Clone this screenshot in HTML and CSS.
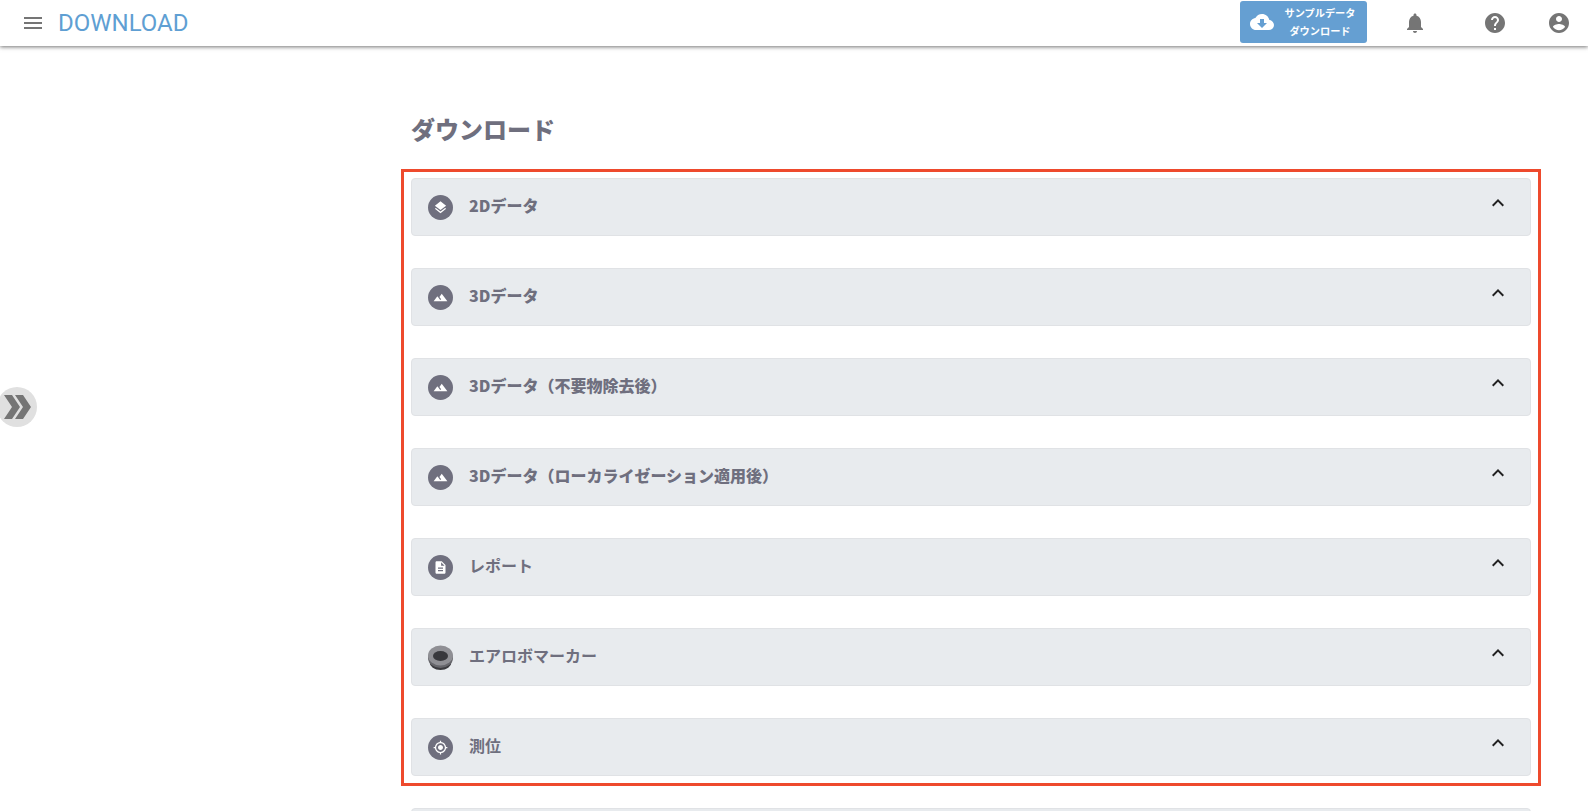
FILE: index.html
```html
<!DOCTYPE html>
<html lang="ja">
<head>
    <meta charset="UTF-8">
    <meta name="viewport" content="width=device-width, initial-scale=1.0">
    <title>DOWNLOAD</title>
    <link rel="stylesheet" href="styles.css">
</head>
<body>

<header class="topbar">
    <svg class="menu-icon" viewBox="0 0 24 24"><path d="M3 18h18v-2H3v2zm0-5h18v-2H3v2zm0-7v2h18V6H3z"/></svg>
    <span class="topbar-title">DOWNLOAD</span>
    <a href="#" class="sample-btn">
        <svg class="sample-icon" viewBox="0 0 24 24"><path d="M19.35 10.04C18.67 6.59 15.64 4 12 4 9.11 4 6.6 5.64 5.35 8.04 2.34 8.36 0 10.91 0 14c0 3.31 2.69 6 6 6h13c2.76 0 5-2.24 5-5 0-2.64-2.05-4.78-4.65-4.96zM17 13l-5 5-5-5h3V9h4v4h3z"/></svg>
        <span class="sample-text">サンプルデータ<br>ダウンロード</span>
    </a>
    <svg class="bar-icon bell" viewBox="0 0 24 24"><path d="M12 22c1.1 0 2-.9 2-2h-4c0 1.1.89 2 2 2zm6-6v-5c0-3.07-1.64-5.64-4.5-6.32V4c0-.83-.67-1.5-1.5-1.5s-1.5.67-1.5 1.5v.68C7.63 5.36 6 7.92 6 11v5l-2 2v1h16v-1l-2-2z"/></svg>
    <svg class="bar-icon help" viewBox="0 0 24 24"><path d="M12 2C6.48 2 2 6.48 2 12s4.48 10 10 10 10-4.48 10-10S17.52 2 12 2zm1 17h-2v-2h2v2zm2.07-7.75l-.9.92C13.45 12.9 13 13.5 13 15h-2v-.5c0-1.1.45-2.1 1.17-2.83l1.24-1.26c.37-.36.59-.86.59-1.41 0-1.1-.9-2-2-2s-2 .9-2 2H8c0-2.21 1.79-4 4-4s4 1.79 4 4c0 .88-.36 1.68-.93 2.25z"/></svg>
    <svg class="bar-icon account" viewBox="0 0 24 24"><path d="M12 2C6.48 2 2 6.48 2 12s4.48 10 10 10 10-4.48 10-10S17.52 2 12 2zm0 3c1.66 0 3 1.34 3 3s-1.34 3-3 3-3-1.34-3-3 1.34-3 3-3zm0 14.2c-2.5 0-4.71-1.28-6-3.22.03-1.99 4-3.08 6-3.08 1.99 0 5.97 1.09 6 3.08-1.29 1.94-3.5 3.22-6 3.22z"/></svg>
</header>

<button class="side-toggle" aria-label="open">
    <svg viewBox="0 0 30 24"><path d="M1 0h8l8 12-8 12H1l8-12z"/><path d="M12 0h8l8 12-8 12h-8l8-12z"/></svg>
</button>

<main class="content">
    <h1 class="page-title">ダウンロード</h1>

    <div class="highlight-box">
        <div class="panel">
            <span class="panel-icon"><svg viewBox="0 0 24 24"><path d="M11.99 18.54l-7.37-5.73L3 14.07l9 7 9-7-1.63-1.27-7.38 5.74zM12 16l7.36-5.73L21 9l-9-7-9 7 1.63 1.27L12 16z"/></svg></span>
            <span class="panel-label bold">2Dデータ</span>
            <svg class="chevron" viewBox="0 0 24 24"><path d="M12 8l-6 6 1.41 1.41L12 10.83l4.59 4.58L18 14z"/></svg>
        </div>
        <div class="panel">
            <span class="panel-icon"><svg viewBox="0 0 24 24"><path d="M14 6l-3.75 5 2.85 3.8-1.6 1.2C9.81 13.75 7 10 7 10l-6 8h22L14 6z"/></svg></span>
            <span class="panel-label bold">3Dデータ</span>
            <svg class="chevron" viewBox="0 0 24 24"><path d="M12 8l-6 6 1.41 1.41L12 10.83l4.59 4.58L18 14z"/></svg>
        </div>
        <div class="panel">
            <span class="panel-icon"><svg viewBox="0 0 24 24"><path d="M14 6l-3.75 5 2.85 3.8-1.6 1.2C9.81 13.75 7 10 7 10l-6 8h22L14 6z"/></svg></span>
            <span class="panel-label bold">3Dデータ（不要物除去後）</span>
            <svg class="chevron" viewBox="0 0 24 24"><path d="M12 8l-6 6 1.41 1.41L12 10.83l4.59 4.58L18 14z"/></svg>
        </div>
        <div class="panel">
            <span class="panel-icon"><svg viewBox="0 0 24 24"><path d="M14 6l-3.75 5 2.85 3.8-1.6 1.2C9.81 13.75 7 10 7 10l-6 8h22L14 6z"/></svg></span>
            <span class="panel-label bold">3Dデータ（ローカライゼーション適用後）</span>
            <svg class="chevron" viewBox="0 0 24 24"><path d="M12 8l-6 6 1.41 1.41L12 10.83l4.59 4.58L18 14z"/></svg>
        </div>
        <div class="panel">
            <span class="panel-icon"><svg viewBox="0 0 24 24"><path d="M14 2H6c-1.1 0-1.99.9-1.99 2L4 20c0 1.1.89 2 1.99 2H18c1.1 0 2-.9 2-2V8l-6-6zm2 16H8v-2h8v2zm0-4H8v-2h8v2zm-3-5V3.5L18.5 9H13z"/></svg></span>
            <span class="panel-label">レポート</span>
            <svg class="chevron" viewBox="0 0 24 24"><path d="M12 8l-6 6 1.41 1.41L12 10.83l4.59 4.58L18 14z"/></svg>
        </div>
        <div class="panel">
            <svg class="marker-icon" viewBox="0 0 25 25">
                <ellipse cx="12.5" cy="17" rx="11" ry="8" fill="#3c3c40"/>
                <ellipse cx="12.5" cy="13" rx="12.5" ry="10" fill="#66666b"/>
                <ellipse cx="12.5" cy="10.5" rx="12.5" ry="10" fill="#8f8f94"/>
                <ellipse cx="12.5" cy="11" rx="7.5" ry="5" fill="#38383c"/>
            </svg>
            <span class="panel-label">エアロボマーカー</span>
            <svg class="chevron" viewBox="0 0 24 24"><path d="M12 8l-6 6 1.41 1.41L12 10.83l4.59 4.58L18 14z"/></svg>
        </div>
        <div class="panel">
            <span class="panel-icon"><svg viewBox="0 0 24 24"><path d="M12 8c-2.21 0-4 1.79-4 4s1.79 4 4 4 4-1.79 4-4-1.79-4-4-4zm8.94 3c-.46-4.17-3.77-7.48-7.94-7.94V1h-2v2.06C6.83 3.52 3.52 6.83 3.06 11H1v2h2.06c.46 4.17 3.77 7.48 7.94 7.94V23h2v-2.06c4.17-.46 7.48-3.77 7.94-7.94H23v-2h-2.06zM12 19c-3.87 0-7-3.13-7-7s3.13-7 7-7 7 3.13 7 7-3.13 7-7 7z"/></svg></span>
            <span class="panel-label">測位</span>
            <svg class="chevron" viewBox="0 0 24 24"><path d="M12 8l-6 6 1.41 1.41L12 10.83l4.59 4.58L18 14z"/></svg>
        </div>
    </div>

    <div class="panel panel-next"></div>
</main>

</body>
</html>
```

FILE: styles.css
```css
html, body {
    height: 100%;
}

body {
    margin: 0;
    padding: 0;
    overflow: hidden;
    background-color: #fff;
    color: #6f6f7e;
    font-family: Roboto, "Noto Sans CJK JP", sans-serif;
}

.topbar {
    display: flex;
    align-items: center;
    height: 46px;
    padding-left: 21px;
    background-color: #fff;
    box-shadow: 0 1px 4px rgba(0, 0, 0, 0.55);
}

.menu-icon {
    width: 24px;
    height: 24px;
    fill: #757575;
}

.topbar-title {
    margin-left: 13px;
    color: #5f9fd3;
    font-size: 24px;
    line-height: 46px;
}

.sample-btn {
    display: flex;
    align-items: center;
    width: 127px;
    height: 42px;
    margin-top: -2px;
    margin-left: auto;
    margin-right: 36px;
    background-color: #659fd2;
    border-radius: 3px;
    color: #fff;
    text-decoration: none;
}

.sample-icon {
    flex: none;
    width: 24px;
    height: 24px;
    margin-left: 10px;
    fill: #fff;
}

.sample-text {
    flex: 1;
    padding-right: 1px;
    font-family: "Noto Sans CJK JP", sans-serif;
    font-size: 10.2px;
    font-weight: 700;
    line-height: 18px;
    text-align: center;
}

.bar-icon {
    flex: none;
    width: 24px;
    height: 24px;
    fill: #757575;
}

.help {
    margin-left: 56px;
}

.account {
    margin-left: 40px;
    margin-right: 17px;
}

.side-toggle {
    position: absolute;
    left: -3px;
    top: 387px;
    width: 40px;
    height: 40px;
    padding: 0 0 0 6px;
    border: none;
    border-radius: 50%;
    background-color: #e0e0e0;
}

.side-toggle svg {
    display: block;
    width: 30px;
    height: 24px;
    fill: #757575;
}

.content {
    margin-left: 401px;
    width: 1140px;
}

.page-title {
    margin: 0;
    padding: 65px 0 23px 10px;
    font-family: "Noto Sans CJK JP", sans-serif;
    font-size: 24px;
    font-weight: 900;
    line-height: 35px;
}

.highlight-box {
    display: flex;
    flex-direction: column;
    gap: 32px;
    padding: 6px 7px 7px;
    border: 3px solid #ee4a2d;
}

.panel {
    display: flex;
    align-items: center;
    height: 58px;
    box-sizing: border-box;
    padding: 0 20px 0 16px;
    background-color: #e8ebee;
    border: 1px solid #e0e2e5;
    border-radius: 4px;
}

.panel-next {
    margin: 22px 10px 0;
}

.panel-icon {
    display: flex;
    flex: none;
    align-items: center;
    justify-content: center;
    width: 25px;
    height: 25px;
    background-color: #6f6f7e;
    border-radius: 50%;
}

.panel-icon svg {
    width: 15px;
    height: 15px;
    fill: #fff;
}

.marker-icon {
    flex: none;
    width: 25px;
    height: 25px;
}

.panel-label {
    margin: 0 0 4px 16px;
    font-family: "Noto Sans CJK JP", sans-serif;
    font-size: 16px;
    font-weight: 700;
    line-height: 24px;
}

.panel-label.bold {
    font-weight: 900;
}

.chevron {
    flex: none;
    width: 24px;
    height: 24px;
    margin: 0 0 8px auto;
    fill: #212121;
}
```
